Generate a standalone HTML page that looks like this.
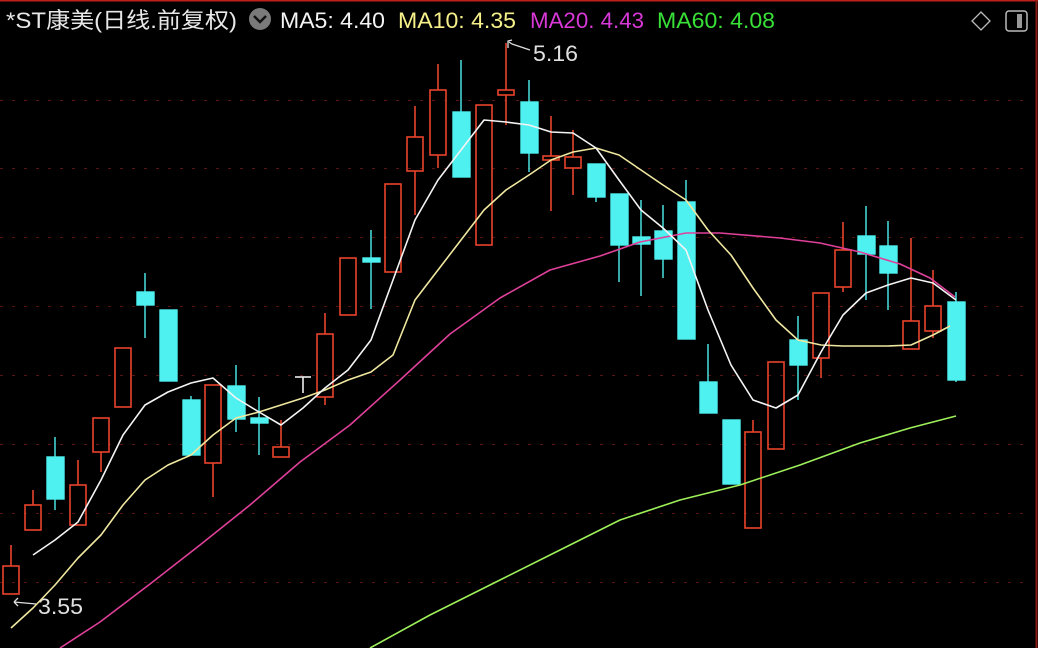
<!DOCTYPE html>
<html><head><meta charset="utf-8"><style>
html,body{margin:0;padding:0;background:#000;width:1038px;height:648px;overflow:hidden}
svg{display:block}
</style></head><body>
<svg width="1038" height="648" xmlns="http://www.w3.org/2000/svg">
<rect width="1038" height="648" fill="#000"/>
<line x1="0" y1="0.5" x2="1038" y2="0.5" stroke="#c0201c" stroke-width="2"/>
<line x1="1036.5" y1="0" x2="1036.5" y2="648" stroke="#8a1a16" stroke-width="2"/>
<g stroke="#5a1410" stroke-width="1" stroke-dasharray="3,9">
<line x1="0" y1="100.5" x2="1030" y2="100.5"/>
<line x1="0" y1="168.5" x2="1030" y2="168.5"/>
<line x1="0" y1="237.5" x2="1030" y2="237.5"/>
<line x1="0" y1="306.5" x2="1030" y2="306.5"/>
<line x1="0" y1="375.5" x2="1030" y2="375.5"/>
<line x1="0" y1="444.5" x2="1030" y2="444.5"/>
<line x1="0" y1="513.5" x2="1030" y2="513.5"/>
<line x1="0" y1="582.5" x2="1030" y2="582.5"/>
</g>
<g font-family="Liberation Sans, Noto Sans CJK SC, sans-serif" font-size="22">
<text x="6" y="28" fill="#e8e8e8" textLength="231" lengthAdjust="spacingAndGlyphs">*ST康美(日线.前复权)</text>
<circle cx="260" cy="19" r="11" fill="#7a7a7a"/>
<path d="M254 16 L260 22 L266 16" stroke="#111" stroke-width="2.5" fill="none"/>
<text x="280" y="28" fill="#f4f4f4" textLength="105" lengthAdjust="spacingAndGlyphs">MA5: 4.40</text>
<text x="398" y="28" fill="#f6f08a" textLength="118" lengthAdjust="spacingAndGlyphs">MA10: 4.35</text>
<text x="530" y="28" fill="#d838d8" textLength="114" lengthAdjust="spacingAndGlyphs">MA20. 4.43</text>
<text x="657" y="28" fill="#38e038" textLength="118" lengthAdjust="spacingAndGlyphs">MA60: 4.08</text>
<text x="533" y="61" fill="#e0e0e0" textLength="45" lengthAdjust="spacingAndGlyphs">5.16</text>
<text x="38" y="614" fill="#e0e0e0" textLength="45" lengthAdjust="spacingAndGlyphs">3.55</text>
</g>
<path d="M981 12 L990 21 L981 30 L972 21 Z" stroke="#bbb" stroke-width="1.3" fill="none"/>
<rect x="1006" y="11" width="21" height="20" rx="3" stroke="#bbb" stroke-width="1.5" fill="none"/>
<rect x="1017" y="14" width="5" height="14" fill="#999"/>
<path d="M530 50 L512 44 M512 44 L509 42 M508 48 L508 41 L512 40" stroke="#ddd" stroke-width="1.3" fill="none"/>
<path d="M36 604 L14 602 M14 602 L18 598 M14 602 L18 606" stroke="#ddd" stroke-width="1.3" fill="none"/>

<g stroke="#e8432c" stroke-width="1.6" fill="none">
<line x1="11" y1="545" x2="11" y2="566"/><rect x="3" y="566" width="16" height="28"/>
<line x1="33" y1="490" x2="33" y2="505"/><rect x="25" y="505" width="16" height="25"/>
<line x1="78" y1="460" x2="78" y2="485"/><rect x="70" y="485" width="16" height="40"/>
<line x1="101" y1="452" x2="101" y2="472"/><rect x="93" y="418" width="16" height="34"/>
<rect x="115" y="348" width="16" height="59"/>
<line x1="213" y1="463" x2="213" y2="497"/><rect x="205" y="385" width="16" height="78"/>
<line x1="281" y1="420" x2="281" y2="447"/><rect x="273" y="447" width="16" height="10"/>
<line x1="325" y1="313" x2="325" y2="334"/><line x1="325" y1="397" x2="325" y2="405"/><rect x="317" y="334" width="16" height="63"/>
<rect x="340" y="258" width="16" height="57"/>
<rect x="385" y="184" width="16" height="88"/>
<line x1="415" y1="106" x2="415" y2="137"/><line x1="415" y1="171" x2="415" y2="215"/><rect x="407" y="137" width="16" height="34"/>
<line x1="438" y1="64" x2="438" y2="90"/><line x1="438" y1="155" x2="438" y2="168"/><rect x="430" y="90" width="16" height="65"/>
<rect x="476" y="105" width="16" height="140"/>
<line x1="506" y1="43" x2="506" y2="90"/><line x1="506" y1="95" x2="506" y2="125"/><rect x="498" y="90" width="16" height="5"/>
<line x1="551" y1="116" x2="551" y2="156"/><line x1="551" y1="160" x2="551" y2="211"/><rect x="543" y="156" width="16" height="4"/>
<line x1="573" y1="130" x2="573" y2="157"/><line x1="573" y1="168" x2="573" y2="195"/><rect x="565" y="157" width="16" height="11"/>
<line x1="753" y1="420" x2="753" y2="432"/><rect x="745" y="432" width="16" height="96"/>
<rect x="768" y="362" width="16" height="87"/>
<line x1="821" y1="358" x2="821" y2="378"/><rect x="813" y="293" width="16" height="65"/>
<line x1="843" y1="222" x2="843" y2="250"/><line x1="843" y1="287" x2="843" y2="292"/><rect x="835" y="250" width="16" height="37"/>
<line x1="911" y1="238" x2="911" y2="321"/><rect x="903" y="321" width="16" height="28"/>
<line x1="933" y1="270" x2="933" y2="306"/><line x1="933" y1="331" x2="933" y2="338"/><rect x="925" y="306" width="16" height="25"/>
</g>
<g stroke="#eee" stroke-width="1.6"><line x1="295" y1="377" x2="311" y2="377"/><line x1="303" y1="377" x2="303" y2="393"/></g>
<g fill="#4ef0f0" stroke="#4ef0f0" stroke-width="1.4">
<line x1="55" y1="437" x2="55" y2="510"/><rect x="47" y="457" width="17" height="42"/>
<line x1="145" y1="273" x2="145" y2="338"/><rect x="137" y="292" width="17" height="13"/>
<rect x="160" y="310" width="17" height="71"/>
<line x1="191" y1="396" x2="191" y2="455"/><rect x="183" y="400" width="17" height="55"/>
<line x1="236" y1="365" x2="236" y2="432"/><rect x="228" y="386" width="17" height="33"/>
<line x1="259" y1="397" x2="259" y2="455"/><rect x="251" y="418" width="17" height="5"/>
<line x1="371" y1="230" x2="371" y2="309"/><rect x="363" y="258" width="17" height="4"/>
<line x1="461" y1="60" x2="461" y2="177"/><rect x="453" y="112" width="17" height="65"/>
<line x1="529" y1="80" x2="529" y2="172"/><rect x="521" y="102" width="17" height="51"/>
<line x1="596" y1="164" x2="596" y2="202"/><rect x="588" y="164" width="17" height="33"/>
<line x1="619" y1="194" x2="619" y2="282"/><rect x="611" y="194" width="17" height="51"/>
<line x1="641" y1="200" x2="641" y2="296"/><rect x="633" y="237" width="17" height="7"/>
<line x1="663" y1="205" x2="663" y2="278"/><rect x="655" y="231" width="17" height="28"/>
<line x1="686" y1="180" x2="686" y2="339"/><rect x="678" y="202" width="17" height="137"/>
<line x1="708" y1="344" x2="708" y2="413"/><rect x="700" y="382" width="17" height="31"/>
<rect x="723" y="420" width="17" height="64"/>
<line x1="798" y1="316" x2="798" y2="400"/><rect x="790" y="340" width="17" height="25"/>
<line x1="866" y1="206" x2="866" y2="300"/><rect x="858" y="236" width="17" height="18"/>
<line x1="888" y1="221" x2="888" y2="310"/><rect x="880" y="246" width="17" height="27"/>
<line x1="956" y1="292" x2="956" y2="382"/><rect x="948" y="302" width="17" height="78"/>
</g>
<g fill="none" stroke-width="1.6" stroke-linejoin="round">
<polyline stroke="#9ef05a" points="370,648 430,615 500,580 560,550 620,520 680,500 740,485 800,465 860,443 910,428 956,416"/>
<polyline stroke="#e0409a" points="60,648 100,622 150,584 200,545 250,505 300,462 350,425 400,380 450,334 500,298 550,270 600,256 640,242 686,233 720,233 780,238 820,243 860,252 900,264 930,278 955,297"/>
<polyline stroke="#f0e8a0" points="11,628 33,608 55,585 78,558 101,535 123,505 145,480 168,465 191,455 213,435 236,418 259,412 281,405 303,398 325,390 348,380 371,372 393,355 415,300 438,270 461,240 484,210 506,190 529,175 551,160 573,152 596,148 619,155 641,170 663,185 686,200 708,230 731,255 753,288 776,320 798,340 821,345 843,346 866,346 888,346 911,345 933,335 950,326"/>
<polyline stroke="#f4f4f4" points="33,555 55,540 78,522 101,480 123,435 145,405 168,392 191,383 213,378 236,398 259,412 281,425 303,408 325,388 348,370 371,340 393,280 415,220 438,180 461,150 484,120 506,122 529,125 551,132 573,133 596,148 619,180 641,210 663,228 686,250 708,310 731,365 753,400 776,408 798,395 821,352 843,315 866,293 888,285 911,278 933,283 956,300"/>
</g>
</svg>
</body></html>
